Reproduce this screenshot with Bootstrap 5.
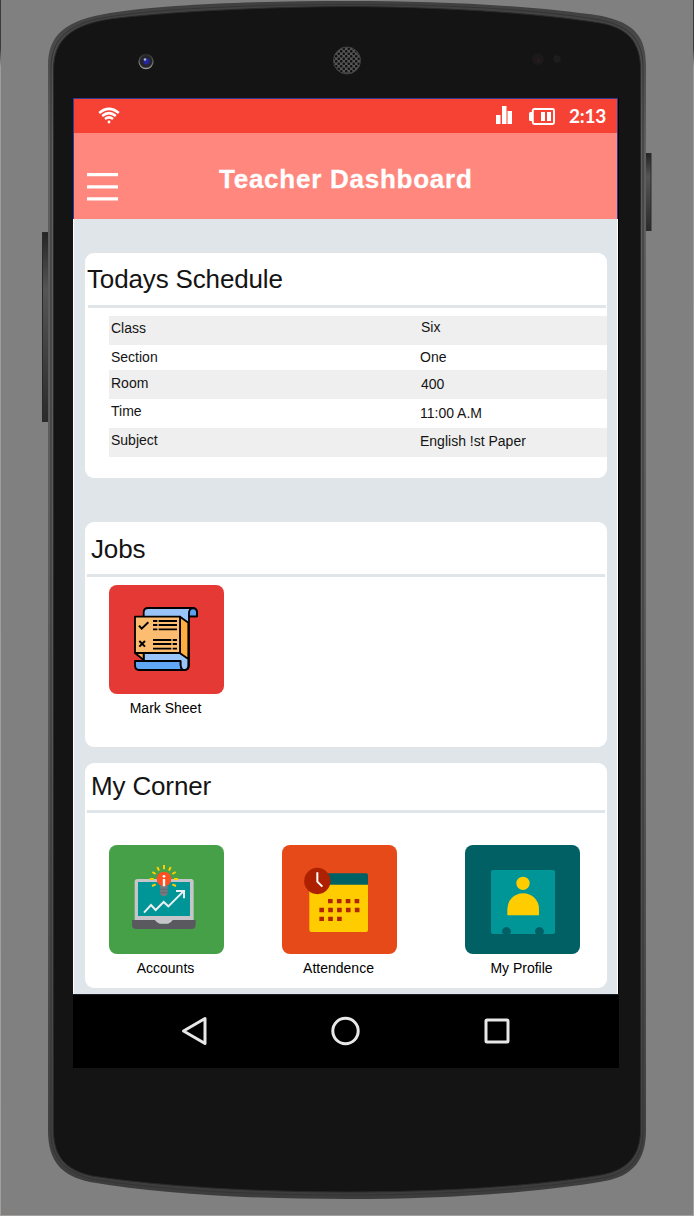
<!DOCTYPE html>
<html lang="en">
<head>
<meta charset="utf-8">
<meta name="viewport" content="width=device-width, initial-scale=1">
<title>Teacher Dashboard</title>
<link href="https://cdn.jsdelivr.net/npm/bootstrap@5.3.0/dist/css/bootstrap.min.css" rel="stylesheet">
<style>
body{background:#808080;font-family:"Liberation Sans",Arial,sans-serif;color:#141414;overflow:hidden}
.stage{width:694px;height:1216px;padding:98px 75px 0 73px}
.device-art{left:0;top:0;z-index:0}
.screen{z-index:1;width:546px}
.panel-area{width:545px;background:#e0e5e9;border-left:1px solid #fff;border-right:1px solid #fff;height:775px;padding:34px 10px 0 11px}
.top-bars{width:545px;border:1px solid #303a92;border-bottom:0}
.status-bar{height:34px;background:#f64235;padding:0 12px 0 24px}
.app-bar{height:86px;background:#ff877e;padding-left:13px}
.app-title{font:bold 26px/32px "Liberation Sans",Arial,sans-serif;color:#fff;letter-spacing:.75px;-webkit-text-stroke:.3px #fff;margin:30px 0 0 101px;white-space:nowrap}
.clock{font:bold 19px/24px Lato,sans-serif;letter-spacing:-.2px;width:36px;white-space:nowrap;color:#fff}
.panel{border:0;border-radius:9px;width:522px;height:225px;background:#fff}
.panel h2{font-size:26px;line-height:30px;margin:0;font-weight:400;white-space:nowrap;letter-spacing:-.15px}
.rule{height:3px;width:518px;background:#e0e5e9}
.sched{margin:8px 0 0 24px;font-size:14px;line-height:16px}
.sched dt,.sched dd{margin:0;font-weight:400;padding-left:2px}
.sched dt{width:310px}
.sched-row{height:29px}
.sched-row:nth-child(odd){background:#efefef}
.tile{width:115px;color:#000;font-size:14px;line-height:16px;text-decoration:none;white-space:nowrap}
.tile span{display:block;margin-right:2px}
.tile-face{width:115px;height:109px;border-radius:8px;margin-bottom:6px}
.nav-keys{height:74px;background:#000;border-top:1px solid #1b1d20;padding:0 109px 2px 107px}
</style>
</head>
<body>
<div class="stage position-relative">
<svg class="device-art position-absolute" width="694" height="1216" viewBox="0 0 694 1216" aria-hidden="true">
<defs>
<linearGradient id="side" x1="0" x2="0" y1="0" y2="1"><stop offset="0" stop-color="#3f3f3f"/><stop offset=".12" stop-color="#5e5e60"/><stop offset=".5" stop-color="#5b5b5e"/><stop offset=".8" stop-color="#4b4b4c"/><stop offset="1" stop-color="#3c3c3c"/></linearGradient>
<linearGradient id="key" x1="0" x2="0" y1="0" y2="1"><stop offset="0" stop-color="#242424"/><stop offset=".3" stop-color="#555"/><stop offset="1" stop-color="#2b2b2b"/></linearGradient>
<linearGradient id="edge" x1="0" x2="0" y1="0" y2="1"><stop offset="0" stop-color="#3c3a38"/><stop offset=".04" stop-color="#3c3a38"/><stop offset=".055" stop-color="#a09c98"/><stop offset="1" stop-color="#a3a09d"/></linearGradient>
<linearGradient id="lens" x1="0" x2="0" y1="0" y2="1"><stop offset="0" stop-color="#2b2b2b"/><stop offset="1" stop-color="#999"/></linearGradient>
<pattern id="mesh" width="5" height="5" patternUnits="userSpaceOnUse"><rect width="5" height="5" fill="#555"/><circle cx="1.25" cy="1.25" r="1.3" fill="#101010"/><circle cx="3.75" cy="3.75" r="1.3" fill="#101010"/></pattern>
</defs>
<rect width="1" height="1216" fill="url(#edge)"/><rect x="693" width="1" height="1216" fill="url(#edge)"/><rect y="1215" width="694" height="1" fill="#a3a09d"/>
<rect x="42.5" y="232.5" width="7" height="189" fill="url(#key)" stroke="#2a2a2a"/>
<rect x="644" y="153.500" width="7" height="77" fill="url(#key)" stroke="#2a2a2a"/>
<path d="M348 1C260 1 165 4 110 13C66 20 48 34 48 66V1130C48 1162 62 1176 90 1182C165 1195 260 1199 348 1199C435 1199 530 1194 605 1181C633 1176 646 1160 646 1130V66C646 36 634 23 602 16C530 5 435 1 348 1Z" fill="url(#side)"/>
<path d="M348 4.500C260 4.500 165 8 108 17C70 23 51 38 51 68V1130C51 1159 65 1172 92 1179C165 1191 260 1195 348 1195C435 1195 530 1190 603 1178C630 1173 643 1158 643 1130V68C643 40 630 26 600 20C530 8 435 4.500 348 4.500Z" fill="none" stroke="#343434"/>
<path d="M348 6.500C260 7 165 12 110 19C73 25 53.500 38 53.500 70V1130C53.500 1157 66 1170 92 1176C165 1187 260 1192 348 1192C435 1192 530 1187 601 1175C628 1170 640.500 1155 640.500 1130V70C640.500 42 628 28 600 23C530 12 435 7 348 6.500Z" fill="#141414" stroke="#292929"/>
<circle cx="146" cy="61.500" r="7" fill="#262626" stroke="url(#lens)" stroke-width="1.300"/><circle cx="146" cy="61" r="4.500" fill="#242439"/><circle cx="146.500" cy="61.500" r="3" fill="#2525a0"/><circle cx="145" cy="59.500" r="1.300" fill="#aebcd0"/>
<circle cx="347" cy="60.500" r="13.500" fill="url(#mesh)" stroke="#444"/>
<circle cx="538" cy="59" r="6" fill="#1b1919"/><circle cx="538.500" cy="60.500" r="1.200" fill="#361d18"/><circle cx="557" cy="59" r="3.800" fill="#1d1d1d"/>
<path d="M618.500 98V994" stroke="#000"/>
</svg>
<main class="screen position-relative">
<div class="top-bars">
<div class="status-bar d-flex align-items-center text-white">
<svg width="22" height="18" viewBox="0 0 22 18" class="me-auto" fill="none" stroke="#fff" stroke-width="2.500" aria-label="Wi-Fi"><path d="M1.200 6Q11-2.300 20.800 6M4.200 9Q11 3.300 17.800 9M7 12Q11 8.800 15 12"/><circle cx="11" cy="15" r="1.400" fill="#fff" stroke="none"/></svg>
<svg width="16" height="18" viewBox="0 0 16 18" fill="#fff" style="margin:0 17px 2px 0" aria-label="Signal"><path d="M0 9h4.500v9H0zM6 0h4.500v18H6zM11.500 5H16v13h-4.500z"/></svg>
<svg width="26" height="17" viewBox="0 0 26 17" fill="#fff" style="margin-right:14px" aria-label="Battery"><rect x="3.800" y="1" width="21.200" height="15" rx="1.500" fill="none" stroke="#fff" stroke-width="1.900"/><path d="M3 4H1.500Q0 4 0 5.500v6Q0 13 1.500 13H3zM12 4h4v9h-4zM18 4h4v9h-4z"/></svg>
<span class="clock">2:13</span>
</div>
<header class="app-bar d-flex align-items-start">
<svg width="31" height="29" viewBox="0 0 31 29" style="margin-top:39px" aria-label="Menu"><path d="M0 2.700h31M0 14.800h31M0 26.800h31" stroke="#fff" stroke-width="3.300"/></svg>
<h1 class="app-title">Teacher Dashboard</h1>
</header>
</div>
<div class="panel-area">
<section class="card panel" style="margin-bottom:44px">
<h2 style="padding:11px 0 0 2px">Todays Schedule</h2>
<div class="rule" style="margin:11px 0 0 3px"></div>
<div class="sched">
<dl class="sched-row d-flex m-0"><dt style="padding-top:4px">Class</dt><dd style="padding-top:3px">Six</dd></dl>
<dl class="sched-row d-flex m-0" style="height:25px"><dt style="padding-top:4px">Section</dt><dd style="padding:4px 0 0 1px">One</dd></dl>
<dl class="sched-row d-flex m-0"><dt style="padding-top:5px">Room</dt><dd style="padding-top:6px">400</dd></dl>
<dl class="sched-row d-flex m-0"><dt style="padding-top:4px">Time</dt><dd style="padding:6px 0 0 1px">11:00 A.M</dd></dl>
<dl class="sched-row d-flex m-0"><dt style="padding-top:4px">Subject</dt><dd style="padding:5px 0 0 1px">English !st Paper</dd></dl>
</div>
</section>
<section class="card panel" style="margin-bottom:16px">
<h2 style="padding:12px 0 0 6px">Jobs</h2>
<div class="rule" style="margin:10px 0 0 2px"></div>
<div class="d-flex" style="padding:8px 0 0 24px">
<a class="tile text-center" href="#">
<svg class="tile-face d-block" viewBox="87 210 345 327" style="background:#e53935" aria-hidden="true">
<g stroke="#000" stroke-width="5.500" stroke-linejoin="round">
<path d="M191 305V292Q191 279 205 279H337Q351 279 351 294V304H327V452Q326 465 312 465H191Z" fill="#99c4fa"/>
<path d="M327 304V293Q328 280 339 280Q351 280 351 293V304Z" fill="#5d9ff0"/>
<path d="M300 305L325 323V432L300 415Z" fill="#ffac40"/>
<path d="M165 414L191 435V414Z" fill="#ffac40"/>
<path d="M165 305H300V414H165Z" fill="#fdbd70"/>
<path d="M165 438H302V452Q303 465 315 465H177Q165 465 165 450Z" fill="#61a5f5"/>
<path d="M302 438V450Q303 465 314 465Q325 465 325 450V432" fill="#99c4fa"/>
</g>
<path d="M177 332l8 9 20-19M178 378l17 17M195 378l-17 17" stroke="#000" stroke-width="6" fill="none"/>
<path d="M219 318h13M236 318h55M219 330h13M236 330h55M219 343h13M236 343h55M219 375h55M278 375h13M219 387h55M278 387h13M219 401h55M278 401h13" stroke="#000" stroke-width="5.500"/>
</svg><span>Mark Sheet</span></a>
</div>
</section>
<section class="card panel">
<h2 style="padding:8px 0 0 6px">My Corner</h2>
<div class="rule" style="margin:9px 0 0 2px"></div>
<div class="d-flex" style="padding:32px 0 0 24px">
<a class="tile text-center" href="#" style="margin-right:58px">
<svg class="tile-face d-block" viewBox="87 255 345 327" style="background:#45a047" aria-hidden="true">
<rect x="164" y="357" width="177" height="130" rx="8" fill="#c6c5ca"/>
<rect x="174" y="366" width="156" height="102" fill="#009698"/>
<path d="M156 480H225Q234 491 242 491H261Q269 491 278 480H347V494Q347 507 333 507H170Q156 507 156 494Z" fill="#59595f"/>
<path d="M225 479H278Q269 491 261 491H242Q234 491 225 479Z" fill="#c6c5ca"/>
<path d="M192 458l21-23 14 15 24-24 14 13 45-45M288 393h24v22" fill="none" stroke="#eceff1" stroke-width="6"/>
<path d="M240 377H263V402Q258 409 252 409Q245 409 240 402Z" fill="#757a80"/>
<path d="M240 388h23M240 398h23" stroke="#56616a" stroke-width="2"/>
<circle cx="252" cy="357" r="22" fill="#ff5023"/>
<path d="M252 357v22" stroke="#fff" stroke-width="7"/><circle cx="252" cy="349" r="4" fill="#fff"/>
<path d="M252 315v13M232 321l5 11M272 321l-5 11M217 336l10 6M287 336l-10 6M209 357h12M282 357h12M216 378l11-5M288 378l-11-5" stroke="#ffce00" stroke-width="6"/>
</svg><span>Accounts</span></a>
<a class="tile text-center" href="#" style="margin-right:68px">
<svg class="tile-face d-block" viewBox="66 45 345 327" style="background:#e64a19" aria-hidden="true">
<path d="M148 160H324V300Q324 306 318 306H154Q148 306 148 300Z" fill="#ffcc00"/>
<path d="M180 130H318Q324 130 324 136V164H180Z" fill="#006165"/>
<circle cx="172" cy="153" r="39.500" fill="#ad2100"/>
<path d="M172 127V155L187 170" fill="none" stroke="#fff" stroke-width="6"/>
<path d="M204 213.500h102M178 240h128M178 266.500h75" stroke="#b02600" stroke-width="13" stroke-dasharray="14 12.600"/>
</svg><span>Attendence</span></a>
<a class="tile text-center" href="#" style="margin-right:-1px">
<svg class="tile-face d-block" viewBox="75 45 345 327" style="background:#006064" aria-hidden="true">
<rect x="153" y="120" width="192" height="192" rx="6" fill="#009698"/>
<circle cx="249" cy="160" r="20" fill="#ffcc00"/>
<path d="M202 256V237A47 47 0 0 1 297 237V256Z" fill="#ffcc00"/>
<path d="M189 312A13 13 0 1 1 210 312ZM288 312A13 13 0 1 1 309 312Z" fill="#006064"/>
</svg><span>My Profile</span></a>
</div>
</section>
</div>
<nav class="nav-keys d-flex justify-content-between align-items-center" aria-label="System">
<svg width="28" height="30" viewBox="0 0 28 30" fill="none" stroke="#e8e8e8" stroke-width="3" stroke-linejoin="round"><path d="M25 2.500V27.500L3.500 15Z"/></svg>
<svg width="30" height="30" viewBox="0 0 30 30" fill="none" stroke="#e8e8e8" stroke-width="3"><circle cx="14.500" cy="15" r="12.700"/></svg>
<svg width="26" height="26" viewBox="0 0 26 26" fill="none" stroke="#e8e8e8" stroke-width="3"><rect x="2" y="2" width="22" height="22" rx="1"/></svg>
</nav>
</main>
</div>
<script src="https://cdn.jsdelivr.net/npm/bootstrap@5.3.0/dist/js/bootstrap.bundle.min.js"></script>
</body>
</html>
